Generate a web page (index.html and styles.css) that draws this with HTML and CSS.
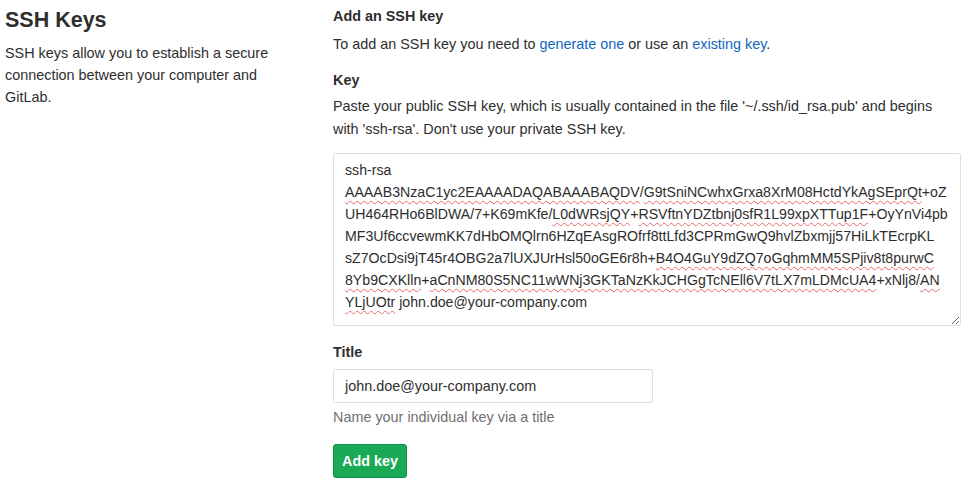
FILE: index.html
```html
<!DOCTYPE html>
<html>
<head>
<meta charset="utf-8">
<link rel="stylesheet" href="styles.css">
</head>
<body>
<div class="page">
  <aside class="intro">
    <h2 class="intro-title">SSH Keys</h2>
    <p class="intro-text">SSH keys allow you to establish a secure connection between your computer and GitLab.</p>
  </aside>
  <main class="form">
    <h4 class="section-title">Add an SSH key</h4>
    <p class="lead">To add an SSH key you need to <a href="#">generate one</a> or use an <a href="#">existing key</a>.</p>
    <label class="label label-key">Key</label>
    <p class="hint">Paste your public SSH key, which is usually contained in the file '~/.ssh/id_rsa.pub' and begins with 'ssh-rsa'. Don't use your private SSH key.</p>
    <div class="textarea">
      <div>ssh-rsa</div>
      <div><span class="sp">AAAAB3NzaC1yc2EAAAADAQABAAABAQDV</span>/<span class="sp">G9tSniNCwhxGrxa8XrM08HctdYkAgSEprQt</span>+oZ</div>
      <div>UH464RHo6BlDWA/7+K69mKfe/<span class="sp">L0dWRsjQY</span>+<span class="sp">RSVftnYDZtbnj0sfR1L99xpXTTup1F</span>+OyYnVi4pb</div>
      <div>MF3Uf6ccvewmKK7dHbOMQlrn6HZqEAsgROfrf8ttLfd3CPRmGwQ9hvlZbxmjj57HiLkTEcrpKL</div>
      <div>sZ7OcDsi9jT45r4OBG2a7lUXJUrHsl50oGE6r8h+<span class="sp">B4O4GuY9dZQ7oGqhmMM5SPjiv8t8purwC</span></div>
      <div><span class="sp">8Yb9CXKlln</span>+<span class="sp">aCnNM80S5NC11wWNj3GKTaNzKkJCHGgTcNEll6V7tLX7mLDMcUA4</span>+xNlj8/<span class="sp">AN</span></div>
      <div><span class="sp">YLjUOtr</span> john.doe@your-company.com</div>
    </div>
    <label class="label label-title">Title</label>
    <div class="input">john.doe@your-company.com</div>
    <p class="help">Name your individual key via a title</p>
    <button class="btn-success">Add key</button>
  </main>
</div>
</body>
</html>
```
FILE: styles.css
```css
* { box-sizing: border-box; }
html, body { margin: 0; padding: 0; background: #fff; }
body {
  font-family: "Liberation Sans", Arial, sans-serif;
  font-size: 14.4px;
  line-height: 22px;
  color: #2e2e2e;
}
.page {
  display: grid;
  grid-template-columns: 328px 628px;
  padding-left: 5px;
}
.intro-title {
  margin: 8px 0 0 0;
  font-size: 21.5px;
  line-height: 24px;
  font-weight: 700;
  color: #2e2e2e;
}
.intro-text {
  margin: 10px 0 0 0;
  line-height: 22px;
  padding-right: 50px;
}
.form { display: flex; flex-direction: column; align-items: flex-start; }
.section-title {
  margin: 5px 0 0 0;
  font-size: 14.4px;
  font-weight: 700;
  line-height: 22px;
}
.lead { margin: 6px 0 0 0; }
a { color: #1068bf; text-decoration: none; }
.label { font-weight: 700; display: block; }
.label-key { margin-top: 14px; }
.hint { margin: 4px 0 0 0; line-height: 23px; }
.textarea {
  margin-top: 12px;
  width: 628px;
  height: 173px;
  border: 1px solid #dfdfdf;
  border-radius: 2px;
  padding: 5px 11px;
  resize: vertical;
  overflow: hidden;
  color: #2e2e2e;
  font-size: 14.15px;
  line-height: 22px;
  white-space: nowrap;
}
.sp {
  text-decoration: underline wavy #ec6a6e;
  text-decoration-thickness: 1px;
  text-underline-offset: 3px;
}
.label-title { margin-top: 15px; }
.input {
  margin-top: 6px;
  width: 320px;
  height: 34px;
  border: 1px solid #dfdfdf;
  border-radius: 2px;
  padding: 5px 11px;
  line-height: 22px;
}
.help { margin: 3px 0 0 0; color: #707070; }
.btn-success {
  margin-top: 16px;
  width: 74px;
  height: 34px;
  background: #1aaa55;
  border: 1px solid #168f48;
  border-radius: 3px;
  color: #fff;
  font-family: inherit;
  font-size: 14.4px;
  font-weight: 700;
  padding: 0;
}
```
